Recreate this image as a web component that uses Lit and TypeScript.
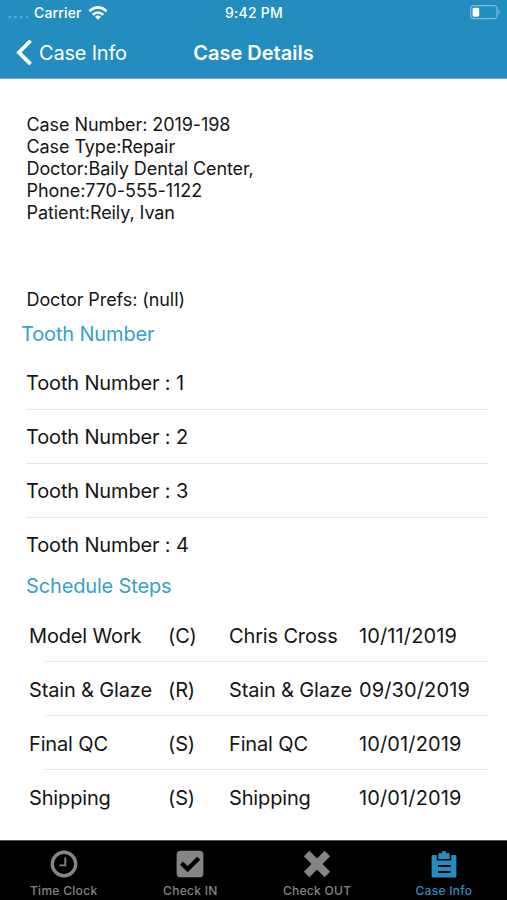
import { LitElement, html, css, svg } from "lit";
import { customElement } from "lit/decorators.js";

const details = [
  "Case Number: 2019-198",
  "Case Type:Repair",
  "Doctor:Baily Dental Center,",
  "Phone:770-555-1122",
  "Patient:Reily, Ivan",
];

const teeth = [1, 2, 3, 4];

const steps = [
  ["Model Work", "(C)", "Chris Cross", "10/11/2019"],
  ["Stain & Glaze", "(R)", "Stain & Glaze", "09/30/2019"],
  ["Final QC", "(S)", "Final QC", "10/01/2019"],
  ["Shipping", "(S)", "Shipping", "10/01/2019"],
];

const clockIcon = svg`
  <circle cx="14" cy="14" r="11.7" fill="none" stroke="currentColor" stroke-width="3.4"/>
  <path d="M15.3 7.6V15.4H9.4" fill="none" stroke="currentColor" stroke-width="1.9"/>`;
const checkIcon = svg`
  <path fill="currentColor" fill-rule="evenodd" d="M4.5 .7H23.5Q27.4 .7 27.4 4.6V23.4Q27.4 27.3 23.5 27.3H4.5Q.6 27.3 .6 23.4V4.6Q.6 .7 4.5 .7ZM4 14.7 11.7 22.3 24.2 9.8 21.1 6.7 11.7 15.9 7 11.5Z"/>`;
const crossIcon = svg`
  <path d="M3.6 3.6 24.4 24.4M24.4 3.6 3.6 24.4" fill="none" stroke="currentColor" stroke-width="7.8"/>`;
const clipboardIcon = svg`
  <path fill="currentColor" fill-rule="evenodd" d="M2.5 5H6.7V10.5H21.3V5H25.5Q26.4 5 26.4 6V26.5Q26.4 27.5 25.4 27.5H2.6Q1.6 27.5 1.6 26.5V6Q1.6 5 2.5 5ZM8 15V17.1H20.6V15ZM8 20.9V23H20.6V20.9Z"/>
  <path fill="currentColor" d="M8.3 3.2H12V2.4Q12 .8 14 .8T16 2.4V3.2H19.7V8.9H8.3Z"/>`;

const tabs = [
  { label: "Time Clock", icon: clockIcon, active: false },
  { label: "Check IN", icon: checkIcon, active: false },
  { label: "Check OUT", icon: crossIcon, active: false },
  { label: "Case Info", icon: clipboardIcon, active: true },
];

@customElement("app-root")
export class AppRoot extends LitElement {
  static styles = css`
    :host {
      display: flex;
      flex-direction: column;
      box-sizing: border-box;
      height: 900px;
      overflow: hidden;
      background: #fff;
      color: #151515;
      font-family: Inter, "Liberation Sans", sans-serif;
      white-space: nowrap;
    }
    svg { display: block; flex: none; }
    header {
      height: 79px;
      box-sizing: border-box;
      flex: none;
      background: #248dc0;
      border-bottom: 1px solid #6db6da;
      color: #fff;
    }
    .status, .nav { display: grid; align-items: center; }
    .status {
      grid-template-columns: 1fr auto 1fr;
      height: 25px;
      padding: 0 7px 0 8px;
      box-sizing: border-box;
      font-size: 14px;
      font-weight: 500;
      letter-spacing: 0.25px;
    }
    .carrier { display: flex; align-items: center; letter-spacing: 0.15px; }
    .dots { margin: 8px 5px 0 0; }
    .wifi { margin-left: 6px; }
    .battery { justify-self: end; }
    .nav { grid-template-columns: 1fr auto 1fr; height: 54px; padding: 0 16px; }
    .back { display: flex; align-items: center; gap: 7px; font-size: 20px; letter-spacing: -0.2px; }
    .back span, .title { padding-top: 1px; }
    .title { font-size: 20px; font-weight: 600; letter-spacing: 0; }
    .info { padding: 35px 26.5px 0; font-size: 18px; line-height: 21.9px; letter-spacing: -0.08px; }
    .prefs { margin-top: 65.5px; }
    h2 { margin: 0; font-size: 20px; font-weight: 400; color: #389fcb; line-height: 26px; letter-spacing: -0.15px; }
    .teeth-title { padding: 10px 0 0 21px; }
    .steps-title { padding: 1px 0 0 26px; }
    .list { font-size: 20px; letter-spacing: -0.15px; }
    .teeth { margin: 9.4px 19px 0 26px; }
    .row { height: 53.8px; box-sizing: border-box; display: flex; align-items: center; padding-top: 1px; }
    .teeth .row:not(:last-child) { border-bottom: 1px solid #e6e6e6; }
    .steps { margin: 10px 19px 0 29px; }
    .step {
      height: 53.8px;
      box-sizing: border-box;
      display: grid;
      grid-template-columns: 139px 61px 130px 1fr;
      align-items: center;
      padding-top: 2px;
      background: linear-gradient(#e6e6e6, #e6e6e6) 16px 100% / 100% 1px no-repeat;
    }
    .step :last-child { letter-spacing: 0.12px; }
    .step:last-child { background: none; }
    .tabs {
      margin-top: auto;
      flex: none;
      height: 60px;
      display: grid;
      grid-template-columns: repeat(4, 1fr);
      background: #000;
      box-sizing: border-box;
      border-top: 1px solid #555;
    }
    .tab {
      display: flex;
      flex-direction: column;
      align-items: center;
      padding: 8.5px 0 0 0.6px;
      color: #858585;
      font-size: 12px;
      font-weight: 500;
      line-height: 16px;
      gap: 5.5px;
      letter-spacing: 0.3px;
    }
    .active { color: #248dc0; }
  `;

  render() {
    return html`
      <header>
        <div class="status">
          <div class="carrier">
            <svg class="dots" width="21" height="4" viewBox="0 0 21 4" fill="#59a9d0">
              <circle cx="1.8" cy="2" r="1.5"/><circle cx="7.5" cy="2" r="1.5"/><circle cx="13.2" cy="2" r="1.5"/><circle cx="19" cy="2" r="1.5"/>
            </svg>
            <span>Carrier</span>
            <svg class="wifi" width="20" height="14" viewBox="0 0 20 14" fill="none" stroke="#fff" stroke-width="2.5">
              <path d="M1.4 5.2Q10-2.4 18.6 5.2M4.8 8.8Q10 4.2 15.2 8.8"/>
              <path d="M10 13.7 7 10.8Q10 8.4 13 10.8Z" fill="#fff" stroke="none"/>
            </svg>
          </div>
          <span>9:42 PM</span>
          <svg class="battery" width="30" height="15" viewBox="0 0 30 15">
            <rect x=".7" y=".7" width="26.3" height="13" rx="3.2" fill="none" stroke="#7dbbdb" stroke-width="1.2"/>
            <rect x="2.6" y="2.7" width="6.6" height="9" rx="1.4" fill="#fff"/>
            <path d="M28.3 5Q29.8 5.8 29.8 7.2T28.3 9.4Z" fill="#7dbbdb"/>
          </svg>
        </div>
        <div class="nav">
          <div class="back">
            <svg width="16" height="27" viewBox="0 0 16 27" fill="none" stroke="#fff" stroke-width="3.7">
              <path d="M14.6 1.7 2.9 13.4 14.6 25.1"/>
            </svg>
            <span>Case Info</span>
          </div>
          <span class="title">Case Details</span>
        </div>
      </header>
      <div class="info">
        ${details.map((line) => html`<div>${line}</div>`)}
        <div class="prefs">Doctor Prefs: (null)</div>
      </div>
      <h2 class="teeth-title">Tooth Number</h2>
      <div class="list teeth">
        ${teeth.map((n) => html`<div class="row">Tooth Number : ${n}</div>`)}
      </div>
      <h2 class="steps-title">Schedule Steps</h2>
      <div class="list steps">
        ${steps.map((s) => html`<div class="step">${s.map((cell) => html`<span>${cell}</span>`)}</div>`)}
      </div>
      <nav class="tabs">
        ${tabs.map(
          (t) => html`<div class="tab ${t.active ? "active" : ""}">
            <svg width="28" height="28" viewBox="0 0 28 28">${t.icon}</svg>
            <span>${t.label}</span>
          </div>`
        )}
      </nav>
    `;
  }
}
